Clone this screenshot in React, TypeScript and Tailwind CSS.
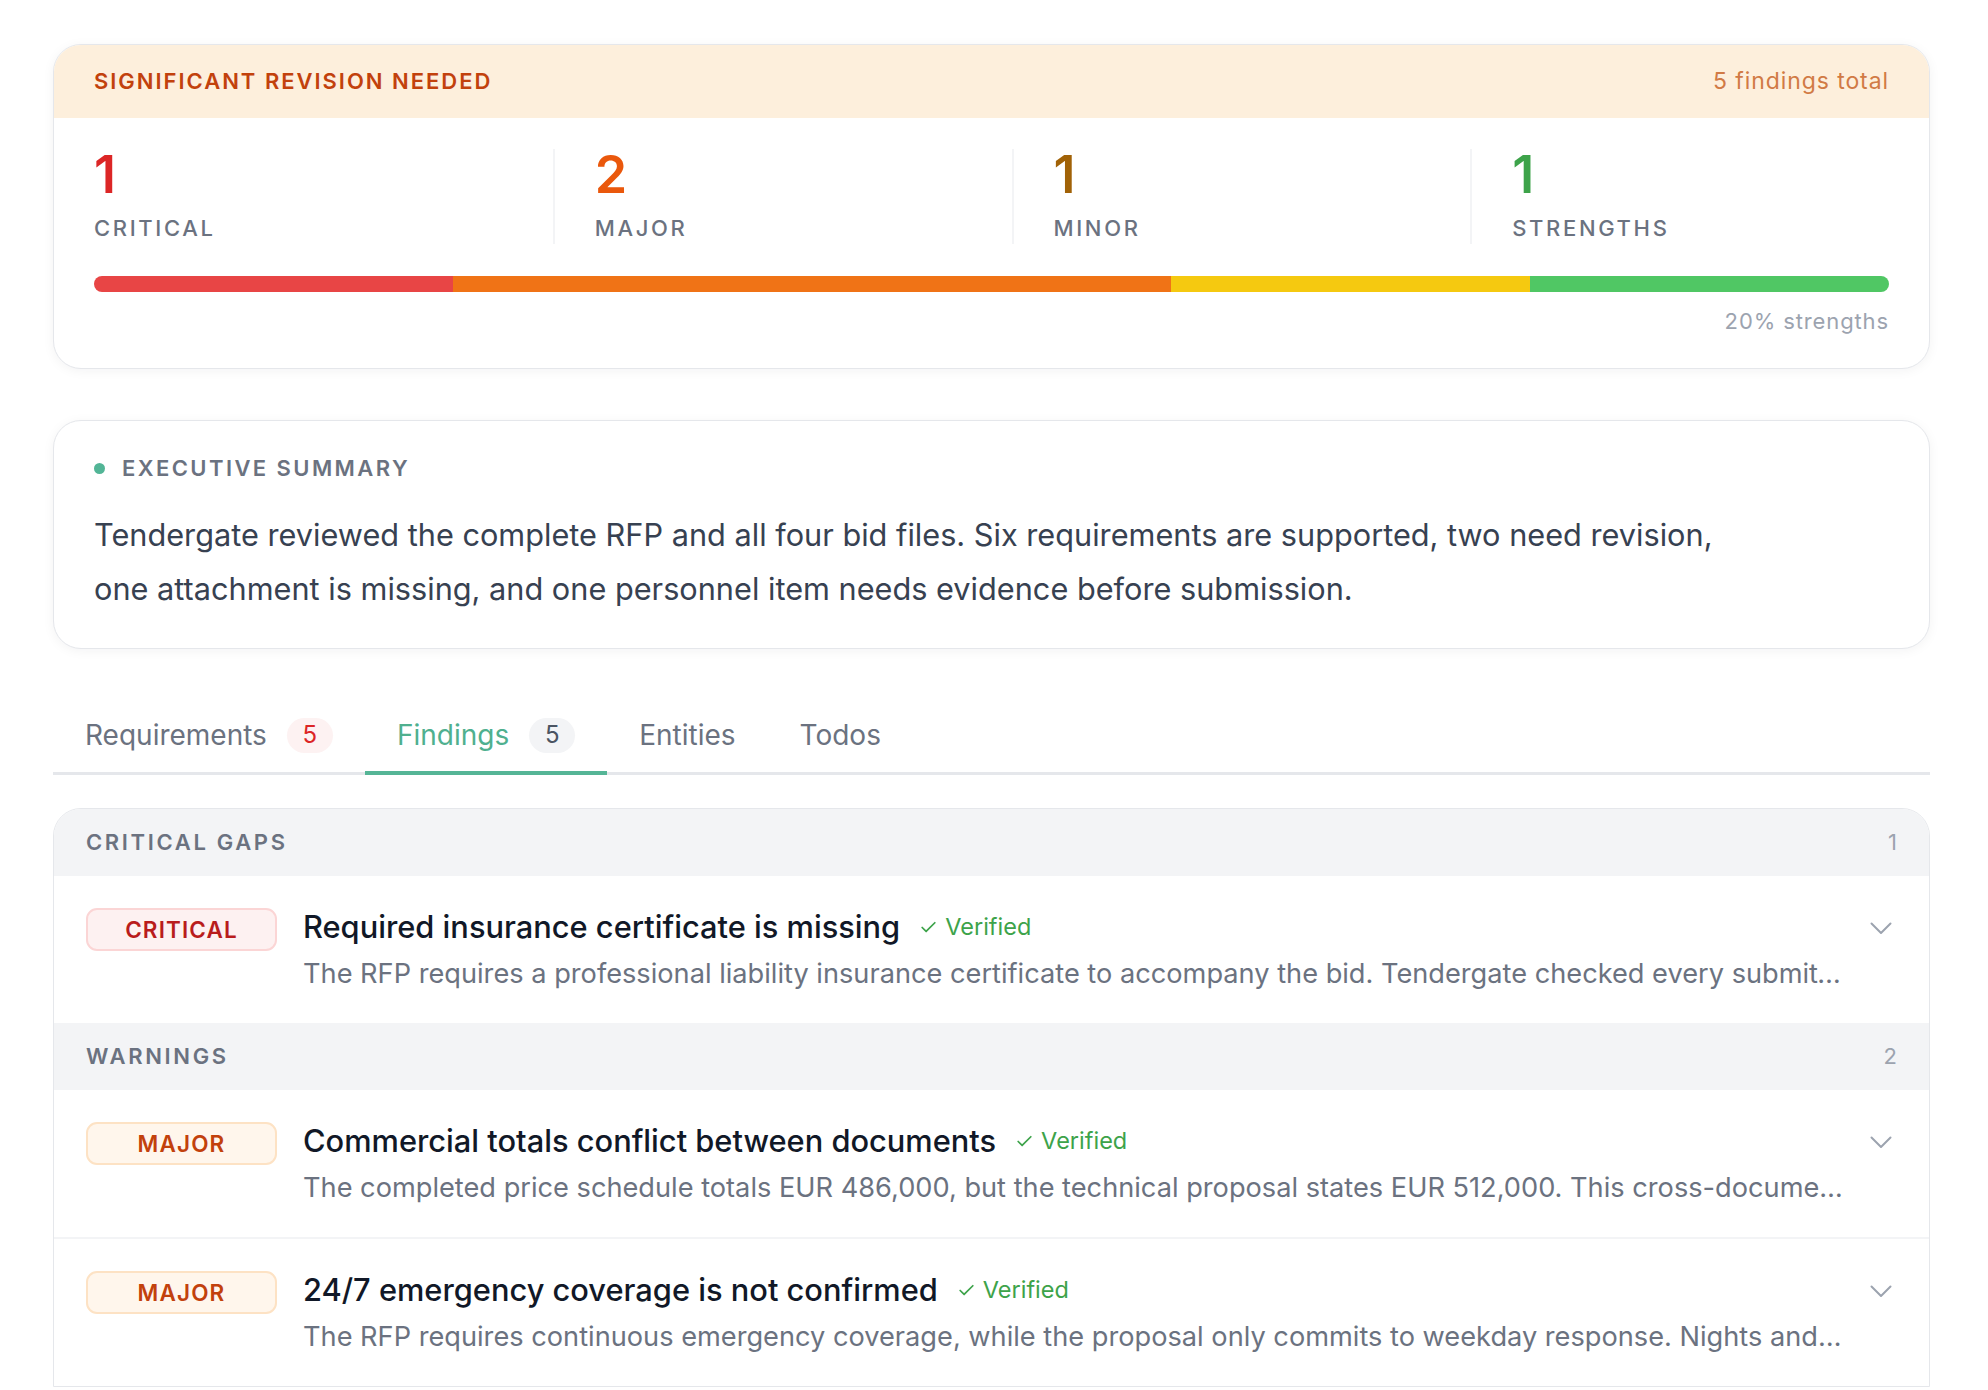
import { Check } from 'lucide-react';

// Review overview - severity counts, summary and findings list

type Severity = 'critical' | 'major';

const stats = [
    { value: 1, label: 'Critical', color: 'text-[#dc2626]', bar: 'bg-[#e84545]' },
    { value: 2, label: 'Major', color: 'text-[#ea580c]', bar: 'bg-[#f07316]' },
    { value: 1, label: 'Minor', color: 'text-[#a16207]', bar: 'bg-[#f5c910]' },
    { value: 1, label: 'Strengths', color: 'text-[#3da34a]', bar: 'bg-[#50c764]' },
];

const total = stats.reduce((sum, s) => sum + s.value, 0);

const groups: {
    title: string;
    items: { severity: Severity; title: string; body: string }[];
}[] = [
    {
        title: 'Critical gaps',
        items: [
            {
                severity: 'critical',
                title: 'Required insurance certificate is missing',
                body: 'The RFP requires a professional liability insurance certificate to accompany the bid. Tendergate checked every submitted file and found no certificate attached.',
            },
        ],
    },
    {
        title: 'Warnings',
        items: [
            {
                severity: 'major',
                title: 'Commercial totals conflict between documents',
                body: 'The completed price schedule totals EUR 486,000, but the technical proposal states EUR 512,000. This cross-document mismatch must be resolved before submission.',
            },
            {
                severity: 'major',
                title: '24/7 emergency coverage is not confirmed',
                body: 'The RFP requires continuous emergency coverage, while the proposal only commits to weekday response. Nights and weekends are not addressed anywhere.',
            },
        ],
    },
];

const badgeStyles: Record<Severity, string> = {
    critical: 'border-[#fbd5d5] bg-[#fdf1f1] text-[#b91c1c]',
    major: 'border-[#fde2c4] bg-[#fff6ec] text-[#c2410c]',
};

const tabs = [
    { label: 'Requirements', count: 5, badge: 'bg-[#fdf2f2] text-[#dc2626]' },
    { label: 'Findings', count: 5, badge: 'bg-[#f3f4f6] text-[#4b5563]', active: true },
    { label: 'Entities' },
    { label: 'Todos' },
];

function Chevron() {
    return (
        <svg width="22" height="13" viewBox="0 0 22 13" fill="none" className="mt-[14px] mr-[5px] shrink-0">
            <path d="M1.5 1.5 11 11 20.5 1.5" stroke="#9ca3af" strokeWidth="2" strokeLinecap="round" strokeLinejoin="round" />
        </svg>
    );
}

function FindingRow({ severity, title, body, last }: { severity: Severity; title: string; body: string; last: boolean }) {
    return (
        <div className={`flex items-start gap-[26px] px-8 pt-8 pb-[31px] ${last ? '' : 'border-b-2 border-[#f3f4f6]'}`}>
            <span
                className={`flex h-[43px] w-[191px] shrink-0 items-center justify-center rounded-[11px] border-2 text-[22.5px] font-semibold tracking-[0.05em] uppercase ${badgeStyles[severity]}`}
            >
                {severity}
            </span>
            <div className="min-w-0 flex-1">
                <div className="flex items-center gap-[19px]">
                    <h4 className="text-[30.8px] leading-[38px] font-medium text-[#111827]">{title}</h4>
                    <span className="flex items-center gap-[7px] text-[23.5px] text-[#3da34a]">
                        <Check className="h-[19px] w-[19px]" strokeWidth={2.2} />
                        Verified
                    </span>
                </div>
                <p className="mt-[10px] truncate text-[27.2px] leading-[36px] text-[#6b7280]">{body}</p>
            </div>
            <Chevron />
        </div>
    );
}

export default function App() {
    return (
        <div className="min-h-screen bg-white pt-[44px] pr-[58px] pl-[53px] font-['Inter',sans-serif]">
            {/* Verdict card */}
            <section className="overflow-hidden rounded-[28px] border border-[#e5e7eb] bg-white shadow-[0_2px_12px_rgba(15,23,42,0.05)]">
                <div className="flex h-[73px] items-center justify-between bg-[#fdefdc] px-10">
                    <span className="text-[22px] font-semibold tracking-[0.09em] text-[#c2410c] uppercase">
                        Significant revision needed
                    </span>
                    <span className="text-[23px] tracking-[0.04em] text-[#d17a45]">{total} findings total</span>
                </div>
                <div className="px-10 pt-[31px] pb-[32px]">
                    <div className="grid grid-cols-4 gap-10">
                        {stats.map((s, i) => (
                            <div key={s.label} className={i > 0 ? 'border-l-2 border-[#f3f4f6] pl-10' : ''}>
                                <div className={`text-[52px] leading-none font-semibold ${s.color}`}>{s.value}</div>
                                <div className="mt-[11px] text-[22px] leading-[32px] font-medium tracking-[0.12em] text-[#6b7280] uppercase">
                                    {s.label}
                                </div>
                            </div>
                        ))}
                    </div>
                    <div className="mt-[32px] flex h-4 overflow-hidden rounded-full">
                        {stats.map((s) => (
                            <div key={s.label} className={s.bar} style={{ width: `${(s.value / total) * 100}%` }} />
                        ))}
                    </div>
                    <div className="mt-[14px] text-right text-[22px] leading-[30px] tracking-[0.04em] text-[#9ca3af]">
                        20% strengths
                    </div>
                </div>
            </section>

            {/* Executive summary */}
            <section className="mt-[51px] rounded-[28px] border border-[#e5e7eb] bg-white px-10 pt-[32px] pb-[32px] shadow-[0_2px_12px_rgba(15,23,42,0.05)]">
                <div className="flex items-center gap-[17px]">
                    <span className="h-[11px] w-[11px] rounded-full bg-[#52b596]" />
                    <span className="text-[22px] leading-[31px] font-semibold tracking-[0.11em] text-[#6b7280] uppercase">
                        Executive summary
                    </span>
                </div>
                <p className="mt-[24px] max-w-[1640px] text-[30.7px] leading-[54px] text-[#374151]">
                    Tendergate reviewed the complete RFP and all four bid files. Six requirements are supported, two need revision,
                    one attachment is missing, and one personnel item needs evidence before submission.
                </p>
            </section>

            {/* Tabs */}
            <nav className="mt-[46px] flex border-b-[3px] border-[#e5e7eb]">
                {tabs.map((t) => (
                    <button
                        key={t.label}
                        className={`-mb-[3px] flex items-center gap-5 border-b-4 px-8 pt-[19px] pb-[15px] text-[28px] leading-[42px] ${
                            t.active ? 'border-[#55b596] text-[#4fb08f]' : 'border-transparent text-[#6b7280]'
                        }`}
                    >
                        {t.label}
                        {t.count !== undefined && (
                            <span className={`flex h-[35px] min-w-[46px] items-center justify-center rounded-full px-3 text-[24px] ${t.badge}`}>
                                {t.count}
                            </span>
                        )}
                    </button>
                ))}
            </nav>

            {/* Findings */}
            <section className="mt-[33px] overflow-hidden rounded-t-[28px] border border-[#e5e7eb] bg-white">
                {groups.map((g) => (
                    <div key={g.title}>
                        <div className="flex h-[67px] items-center justify-between bg-[#f3f4f6] px-8">
                            <span className="text-[22px] font-semibold tracking-[0.12em] text-[#6b7280] uppercase">{g.title}</span>
                            <span className="text-[22px] text-[#9ca3af]">{g.items.length}</span>
                        </div>
                        {g.items.map((f, i) => (
                            <FindingRow key={f.title} {...f} last={i === g.items.length - 1} />
                        ))}
                    </div>
                ))}
            </section>
        </div>
    );
}
